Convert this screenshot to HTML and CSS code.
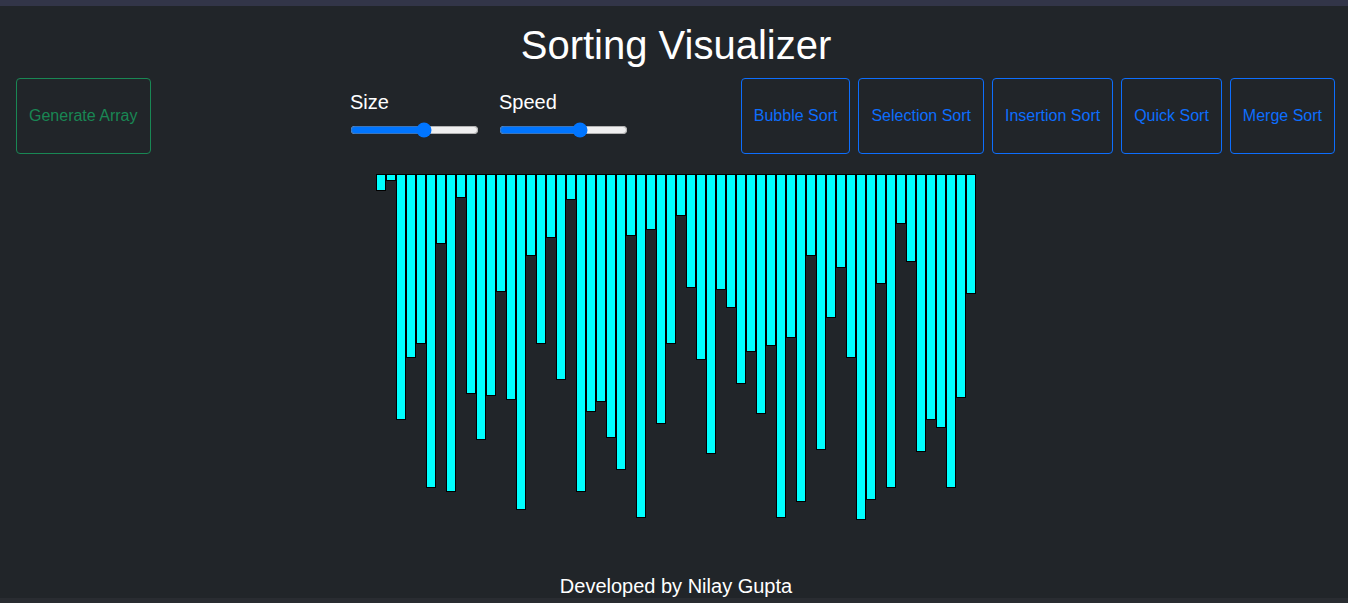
FILE: index.html
```html
<!DOCTYPE html>
<html>
  <head>
    <link rel="stylesheet" href="styles.css">
  </head>

  <body>
    <div class="topStrip"></div>

    <div id="page">
      <!-- title -->
      <h1 class="title">Sorting Visualizer</h1>

      <!-- controls -->
      <div class="controls">
        <div class="col colLeft">
          <button class="btn btnGreen" id="generate">Generate Array</button>
        </div>

        <div class="col colMid">
          <div class="slider">
            <label for="size">Size</label>
            <input id="size" type="range" min="0" max="100" value="58">
          </div>
          <div class="slider">
            <label for="speed">Speed</label>
            <input id="speed" type="range" min="0" max="100" value="65">
          </div>
        </div>

        <div class="col colRight">
          <button class="btn btnBlue">Bubble Sort</button>
          <button class="btn btnBlue">Selection Sort</button>
          <button class="btn btnBlue">Insertion Sort</button>
          <button class="btn btnBlue">Quick Sort</button>
          <button class="btn btnBlue">Merge Sort</button>
        </div>
      </div>

      <!-- bars -->
      <div id="bars"></div>

      <!-- footer -->
      <p class="footer">Developed by Nilay Gupta</p>
    </div>

    <div class="bottomStrip"></div>

    <script>
      var heights = [16, 6, 245, 183, 169, 313, 69, 317, 23, 219,
                     265, 221, 117, 225, 335, 81, 169, 63, 205, 25,
                     317, 237, 227, 263, 295, 61, 343, 55, 249, 169,
                     41, 113, 185, 279, 115, 133, 209, 177, 239, 171,
                     343, 163, 327, 81, 275, 143, 93, 183, 345, 325,
                     109, 313, 49, 87, 277, 245, 253, 313, 223, 119];

      var bars = document.getElementById('bars');
      heights.forEach(function(h) {
        var bar = document.createElement('div');
        bar.className = 'bar';
        bar.style.height = (h + 1) + 'px';
        bars.appendChild(bar);
      });
    </script>
  </body>
</html>
```

FILE: styles.css
```css
html, body {
  height: 100%;
}

body {
  margin: 0;
  background: #212529;
  color: #ffffff;
  font-family: "Liberation Sans", Arial, sans-serif;
  display: flex;
  flex-direction: column;
}

.topStrip {
  height: 6px;
  background: #323548;
}

.bottomStrip {
  height: 5px;
  background: #292c31;
}

#page {
  flex: 1;
  display: flex;
  flex-direction: column;
  padding-left: 4px;
}

.title {
  margin: 15px 0 9px;
  font-size: 40px;
  font-weight: normal;
  line-height: 48px;
  text-align: center;
}

.controls {
  display: grid;
  grid-template-columns: 1fr 1fr 2fr;
  align-items: center;
}

.col {
  display: flex;
  align-items: center;
}

.colLeft {
  padding-left: 12px;
}

.colMid {
  padding-left: 10px;
  gap: 20px;
}

.colRight {
  justify-content: flex-end;
  gap: 8px;
  padding-right: 13px;
}

.btn {
  font-family: "Liberation Sans", Arial, sans-serif;
  font-size: 16px;
  line-height: 24px;
  padding: 25px 12px;
  background: transparent;
  border: 1px solid;
  border-radius: 4px;
}

.btnGreen {
  color: #198754;
  border-color: #198754;
}

.btnBlue {
  color: #0d6efd;
  border-color: #0d6efd;
}

.slider {
  display: flex;
  flex-direction: column;
  gap: 6px;
  padding-bottom: 2px;
}

.slider label {
  font-size: 20px;
  line-height: 23px;
}

.slider input {
  margin: 2px 0;
  width: 129px;
}

#bars {
  flex: 1;
  display: flex;
  justify-content: center;
  align-items: flex-start;
  margin-top: 20px;
}

.bar {
  width: 10px;
  box-sizing: border-box;
  border: 1px solid #000000;
  background: #00ffff;
}

.footer {
  margin: 0;
  font-size: 20px;
  line-height: 23px;
  text-align: center;
}
```
